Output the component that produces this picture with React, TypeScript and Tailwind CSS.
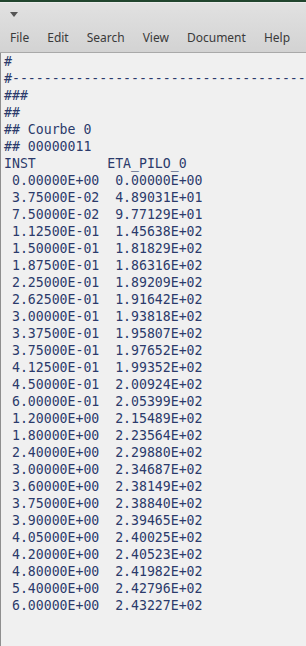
import React from "react";

const rows: [string, string][] = [
    ["0.00000E+00", "0.00000E+00"],
    ["3.75000E-02", "4.89031E+01"],
    ["7.50000E-02", "9.77129E+01"],
    ["1.12500E-01", "1.45638E+02"],
    ["1.50000E-01", "1.81829E+02"],
    ["1.87500E-01", "1.86316E+02"],
    ["2.25000E-01", "1.89209E+02"],
    ["2.62500E-01", "1.91642E+02"],
    ["3.00000E-01", "1.93818E+02"],
    ["3.37500E-01", "1.95807E+02"],
    ["3.75000E-01", "1.97652E+02"],
    ["4.12500E-01", "1.99352E+02"],
    ["4.50000E-01", "2.00924E+02"],
    ["6.00000E-01", "2.05399E+02"],
    ["1.20000E+00", "2.15489E+02"],
    ["1.80000E+00", "2.23564E+02"],
    ["2.40000E+00", "2.29880E+02"],
    ["3.00000E+00", "2.34687E+02"],
    ["3.60000E+00", "2.38149E+02"],
    ["3.75000E+00", "2.38840E+02"],
    ["3.90000E+00", "2.39465E+02"],
    ["4.05000E+00", "2.40025E+02"],
    ["4.20000E+00", "2.40523E+02"],
    ["4.80000E+00", "2.41982E+02"],
    ["5.40000E+00", "2.42796E+02"],
    ["6.00000E+00", "2.43227E+02"],
];

const menu = ["File", "Edit", "Search", "View", "Document", "Help"];

const lines = [
    "#",
    "#" + "-".repeat(60),
    "###",
    "##",
    "## Courbe 0",
    "## 00000011",
    "INST         ETA_PILO_0",
    ...rows.map(([a, b]) => ` ${a}  ${b}`),
];

export default function App() {
    return (
        <div className="w-[306px] h-[646px] flex flex-col overflow-hidden bg-[#f0f0f0]">
            <div className="h-[53px] shrink-0 flex flex-col bg-gradient-to-b from-[#e2e2e2] to-[#d3d3d3] border-b border-[#a9a9a9]">
                <div className="h-[2px] bg-[#21452e]" />
                <div className="h-[1px] bg-[#ececec]" />
                <div className="h-[22px] flex items-center pl-[10px]">
                    <svg width="8" height="5" viewBox="0 0 8 5">
                        <polygon points="0,0 8,0 4,5" fill="#555" />
                    </svg>
                </div>
                <div className="flex items-center h-[26px] pl-[1px] font-['Noto_Sans',sans-serif] text-[12px] text-[#3a3a3a]">
                    {menu.map((m) => (
                        <span key={m} className="px-[9px]">
                            {m}
                        </span>
                    ))}
                </div>
            </div>
            <div className="flex-1 border-l border-[#8f8f8f] pl-[3px] overflow-hidden">
                <pre className="font-['DejaVu_Sans_Mono',monospace] text-[13.2px] leading-[17px] text-[#2b3a6b] whitespace-pre">
                    {lines.join("\n")}
                </pre>
            </div>
        </div>
    );
}
